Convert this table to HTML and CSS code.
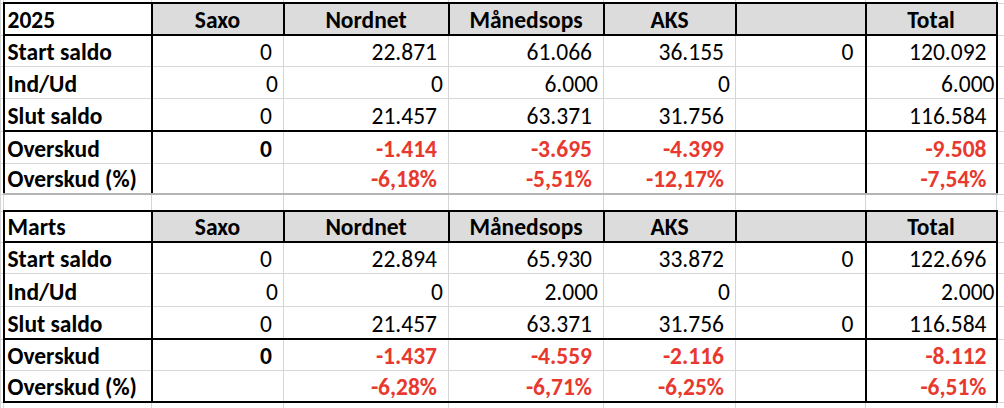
FILE: index.html
```html
<!DOCTYPE html>
<html lang="da">
<head>
<meta charset="utf-8">
<title>Overskud</title>
<link rel="stylesheet" href="styles.css">
</head>
<body>
<table class="sheet">
  <colgroup>
    <col class="c-m1"><col class="c-a"><col class="c-b"><col class="c-c"><col class="c-d"><col class="c-e"><col class="c-f"><col class="c-g"><col class="c-m2">
  </colgroup>
  <tr class="edge-top"><td></td><td></td><td></td><td></td><td></td><td></td><td></td><td></td><td></td></tr>
  <tr class="hdr r-h1">
    <td class="m"></td><th class="lbl">2025</th><th>Saxo</th><th>Nordnet</th><th>Månedsops</th><th>AKS</th><th></th><th>Total</th><td class="m"></td>
  </tr>
  <tr class="r-a">
    <td class="m"></td><td class="lbl">Start saldo</td><td class="n">0</td><td class="n">22.871</td><td class="n">61.066</td><td class="n">36.155</td><td class="n">0</td><td class="n tot">120.092</td><td class="m"></td>
  </tr>
  <tr class="r-b io">
    <td class="m"></td><td class="lbl">Ind/Ud</td><td class="n">0</td><td class="n">0</td><td class="n">6.000</td><td class="n">0</td><td class="n"></td><td class="n tot">6.000</td><td class="m"></td>
  </tr>
  <tr class="r-c">
    <td class="m"></td><td class="lbl">Slut saldo</td><td class="n">0</td><td class="n">21.457</td><td class="n">63.371</td><td class="n">31.756</td><td class="n"></td><td class="n tot">116.584</td><td class="m"></td>
  </tr>
  <tr class="r-d sep bold">
    <td class="m"></td><td class="lbl">Overskud</td><td class="n">0</td><td class="n neg">-1.414</td><td class="n neg">-3.695</td><td class="n neg">-4.399</td><td class="n"></td><td class="n tot neg">-9.508</td><td class="m"></td>
  </tr>
  <tr class="r-e bold last-soft">
    <td class="m"></td><td class="lbl">Overskud (%)</td><td class="n"></td><td class="n neg">-6,18%</td><td class="n neg">-5,51%</td><td class="n neg">-12,17%</td><td class="n"></td><td class="n tot neg">-7,54%</td><td class="m"></td>
  </tr>
  <tr class="spacer"><td></td><td></td><td></td><td></td><td></td><td></td><td></td><td></td><td></td></tr>
  <tr class="hdr r-h2">
    <td class="m"></td><th class="lbl">Marts</th><th>Saxo</th><th>Nordnet</th><th>Månedsops</th><th>AKS</th><th></th><th>Total</th><td class="m"></td>
  </tr>
  <tr class="r-f">
    <td class="m"></td><td class="lbl">Start saldo</td><td class="n">0</td><td class="n">22.894</td><td class="n">65.930</td><td class="n">33.872</td><td class="n">0</td><td class="n tot">122.696</td><td class="m"></td>
  </tr>
  <tr class="r-g io">
    <td class="m"></td><td class="lbl">Ind/Ud</td><td class="n">0</td><td class="n">0</td><td class="n">2.000</td><td class="n">0</td><td class="n"></td><td class="n tot">2.000</td><td class="m"></td>
  </tr>
  <tr class="r-h">
    <td class="m"></td><td class="lbl">Slut saldo</td><td class="n">0</td><td class="n">21.457</td><td class="n">63.371</td><td class="n">31.756</td><td class="n">0</td><td class="n tot">116.584</td><td class="m"></td>
  </tr>
  <tr class="r-i sep bold">
    <td class="m"></td><td class="lbl">Overskud</td><td class="n">0</td><td class="n neg">-1.437</td><td class="n neg">-4.559</td><td class="n neg">-2.116</td><td class="n"></td><td class="n tot neg">-8.112</td><td class="m"></td>
  </tr>
  <tr class="r-j bold last-hard">
    <td class="m"></td><td class="lbl">Overskud (%)</td><td class="n"></td><td class="n neg">-6,28%</td><td class="n neg">-6,71%</td><td class="n neg">-6,25%</td><td class="n"></td><td class="n tot neg">-6,51%</td><td class="m"></td>
  </tr>
  <tr class="edge-bottom"><td></td><td></td><td></td><td></td><td></td><td></td><td></td><td></td><td></td></tr>
</table>
</body>
</html>
```

FILE: styles.css
```css
html, body {
  margin: 0;
  padding: 0;
  background: #ffffff;
}

.sheet {
  border-collapse: collapse;
  table-layout: fixed;
  width: 1004px;
  font-family: "Carlito", "Lato", "Liberation Sans", sans-serif;
  font-size: 23.5px;
  color: #000000;
}

.c-m1 { width: 3px; }
.c-a { width: 148px; }
.c-b { width: 132px; }
.c-c { width: 165px; }
.c-d { width: 155px; }
.c-e { width: 132px; }
.c-f { width: 130px; }
.c-g { width: 131px; }
.c-m2 { width: 8px; }

.sheet td,
.sheet th {
  border: 1px solid #d6d6d6;
  padding: 0 3px 2px 3px;
  line-height: 24px;
  vertical-align: bottom;
  white-space: nowrap;
  overflow: hidden;
}

.sheet td.m {
  padding: 0;
}

.edge-top td,
.edge-bottom td,
.spacer td {
  padding: 0;
  line-height: 0;
  font-size: 0;
}

.edge-top { height: 3px; }
.edge-top td { border-top: none; }
.edge-bottom { height: 6px; }
.edge-bottom td { border-bottom: none; }
.spacer { height: 17px; }

.r-h1 { height: 32px; }
.r-a { height: 31px; }
.r-b { height: 32px; }
.r-c { height: 33px; }
.r-d { height: 32px; }
.r-e { height: 31px; }
.r-h2 { height: 31px; }
.r-f { height: 31px; }
.r-g { height: 33px; }
.r-h { height: 33px; }
.r-i { height: 31px; }
.r-j { height: 32px; }

.hdr th {
  border: 2px solid #000000;
  background: #dcdcdc;
  font-weight: 700;
  text-align: center;
}

.hdr th.lbl {
  background: #ffffff;
  text-align: left;
}

.sheet td.lbl {
  font-weight: 700;
  text-align: left;
  border-left: 2px solid #000000;
  border-right: 2px solid #000000;
}

.sheet td.n {
  text-align: right;
  padding-right: 11px;
}

.io td.n {
  padding-right: 5px;
}

.sheet td.tot {
  border-left: 2px solid #000000;
  border-right: 2px solid #000000;
  padding-right: 9px;
}

.io td.tot {
  padding-right: 1px;
}

.sep td:not(.m) {
  border-top: 2px solid #000000;
}

.bold td {
  font-weight: 700;
}

.neg {
  color: #e8392f;
}

.last-soft td:not(.m) {
  border-bottom: 2px solid #b4b4b4;
}

.last-hard td:not(.m) {
  border-bottom: 2px solid #000000;
}
```
